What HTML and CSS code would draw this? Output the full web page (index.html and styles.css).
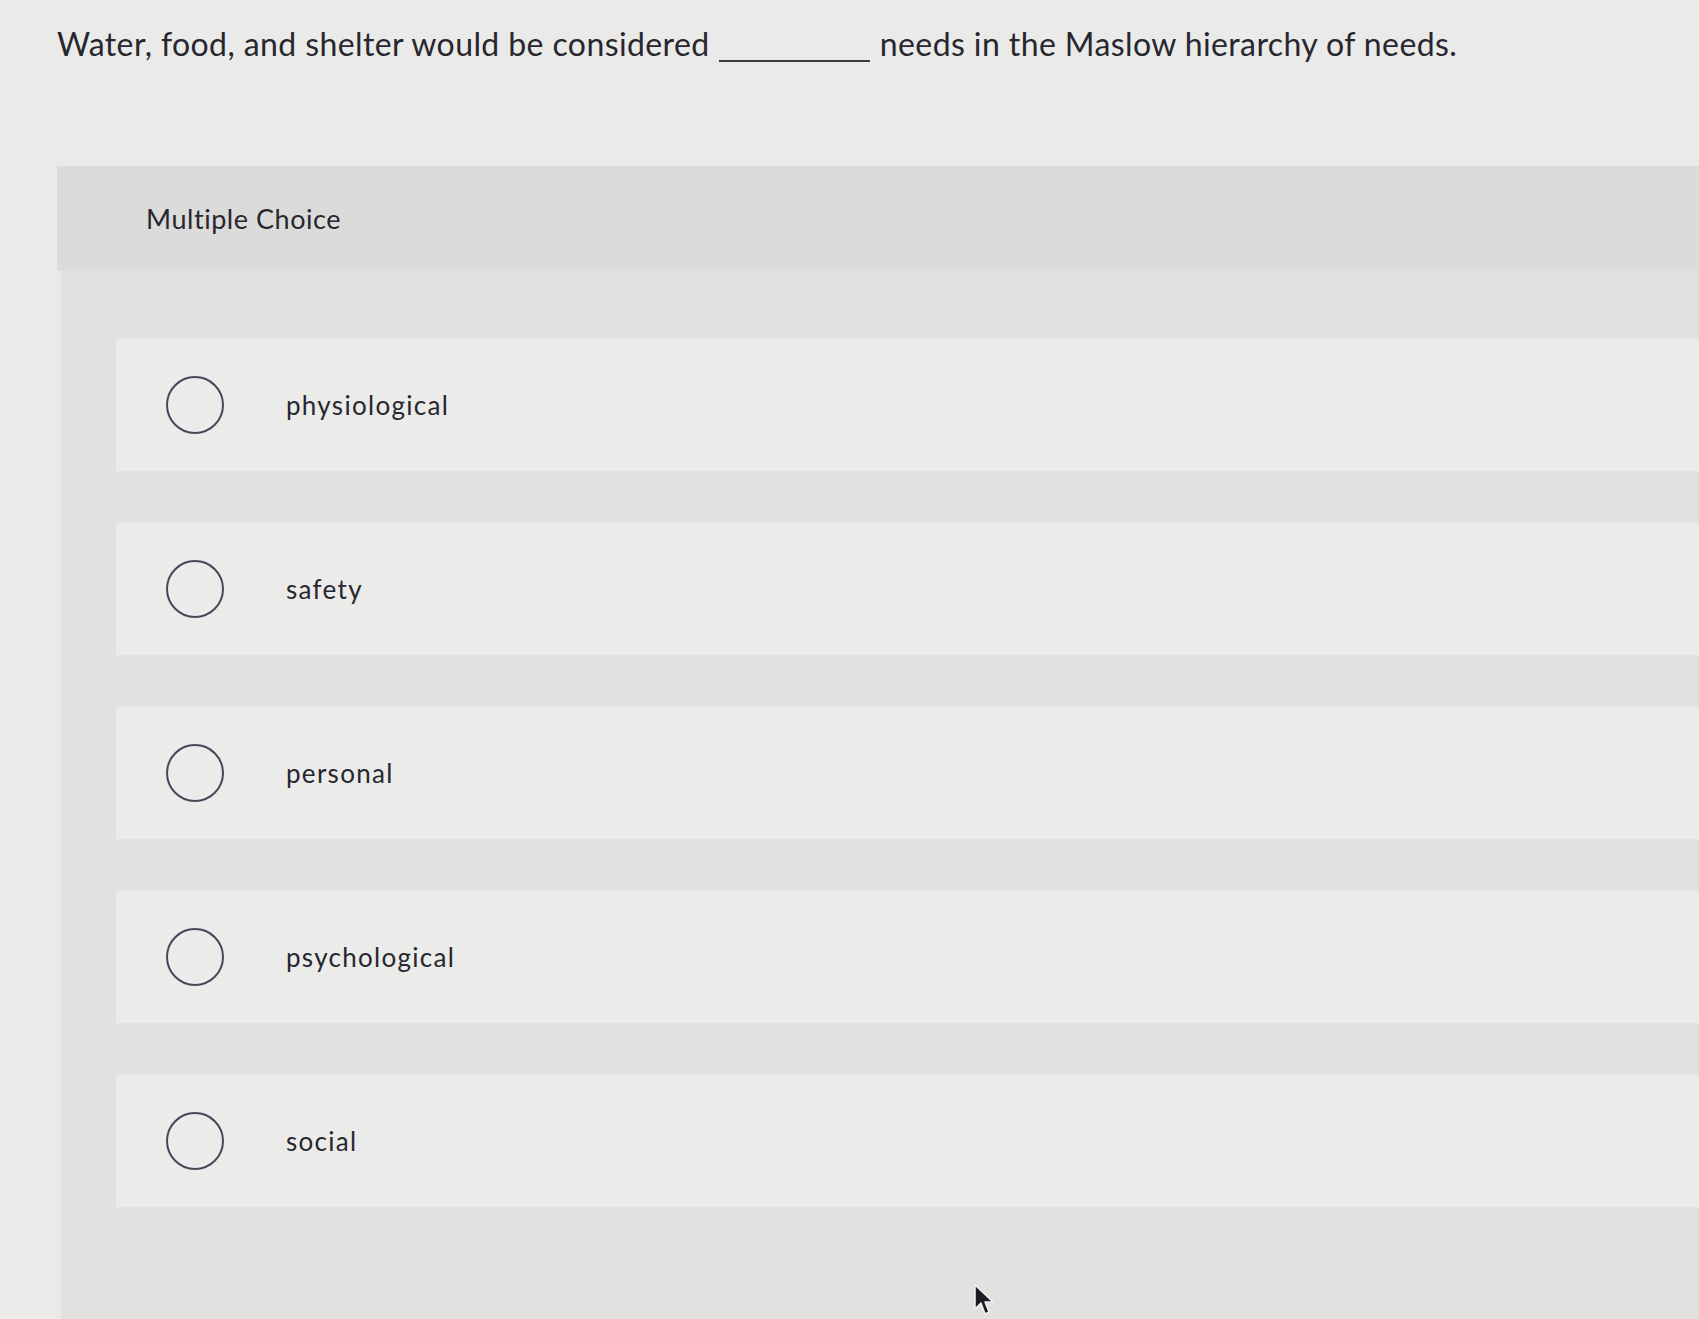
FILE: index.html
```html
<!DOCTYPE html>
<html lang="en">
<head>
<meta charset="utf-8">
<title>Multiple Choice</title>
<link rel="stylesheet" href="styles.css">
</head>
<body>
<div class="page">
  <p class="question">Water, food, and shelter would be considered <span class="blank"></span> needs in the Maslow hierarchy of needs.</p>
  <section class="panel">
    <div class="panel-header">Multiple Choice</div>
    <div class="options">
      <label class="option"><span class="radio"></span><span class="label">physiological</span></label>
      <label class="option"><span class="radio"></span><span class="label">safety</span></label>
      <label class="option"><span class="radio"></span><span class="label">personal</span></label>
      <label class="option"><span class="radio"></span><span class="label">psychological</span></label>
      <label class="option"><span class="radio"></span><span class="label">social</span></label>
    </div>
  </section>
  <svg class="cursor" width="22" height="34" viewBox="0 0 22 34"><path d="M2 2 L2 26 L8 20 L12 31 L16 29 L12 19 L20 19 Z" fill="#1d1d24" stroke="#f2f2f2" stroke-width="1.5" stroke-linejoin="round"/></svg>
</div>
</body>
</html>
```

FILE: styles.css
```css
html, body {
  margin: 0;
  padding: 0;
}
body {
  background: #eaebe8;
  font-family: "Lato", "Liberation Sans", sans-serif;
  color: #28262f;
}
.page {
  position: relative;
  height: 1319px;
  overflow: hidden;
}
.question {
  margin: 0;
  padding: 24px 0 0 57px;
  font-size: 32px;
  line-height: 40px;
  letter-spacing: 0.4px;
  white-space: nowrap;
}
.blank {
  display: inline-block;
  width: 151px;
  height: 2px;
  background: #3a3842;
  vertical-align: -6px;
  margin: 0 1px 0 1px;
}
.panel {
  margin: 102px 0 0 61px;
  background: #e1e2df;
  height: 1200px;
}
.panel-header {
  height: 105px;
  background: #dbdcda;
  margin-left: -4px;
  padding-left: 89px;
  display: flex;
  align-items: center;
  font-size: 27px;
  letter-spacing: 0.55px;
}
.options {
  display: flex;
  flex-direction: column;
  gap: 52px;
  padding: 68px 0 0 55px;
}
.option {
  height: 132px;
  background: #ebecea;
  display: flex;
  align-items: center;
  padding-left: 50px;
}
.radio {
  width: 54px;
  height: 54px;
  border: 2px solid #46475a;
  border-radius: 50%;
  flex: none;
}
.label {
  margin-left: 62px;
  font-size: 26px;
  letter-spacing: 1.3px;
}
.cursor {
  position: absolute;
  left: 973px;
  top: 1283px;
}
```
